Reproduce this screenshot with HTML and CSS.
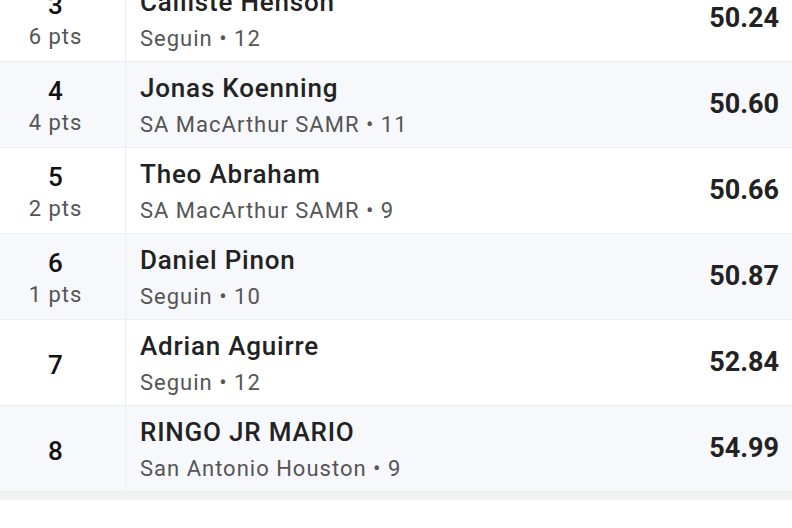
FILE: index.html
```html
<!DOCTYPE html>
<html lang="en-us">
  <head>
    <meta charset="utf-8">
    <title>Results</title>
    <link rel="stylesheet" href="styles.css">
  </head>
  <body>

    <!-- Results list -->
    <div class="results">
      <div class="row">
        <div class="place"><span class="rank">3</span><span class="pts">6 pts</span></div>
        <div class="athlete"><span class="name">Calliste Henson</span><span class="team">Seguin • 12</span></div>
        <div class="mark">50.24</div>
      </div>
      <div class="row alt">
        <div class="place"><span class="rank">4</span><span class="pts">4 pts</span></div>
        <div class="athlete"><span class="name">Jonas Koenning</span><span class="team">SA MacArthur SAMR • 11</span></div>
        <div class="mark">50.60</div>
      </div>
      <div class="row">
        <div class="place"><span class="rank">5</span><span class="pts">2 pts</span></div>
        <div class="athlete"><span class="name">Theo Abraham</span><span class="team">SA MacArthur SAMR • 9</span></div>
        <div class="mark">50.66</div>
      </div>
      <div class="row alt">
        <div class="place"><span class="rank">6</span><span class="pts">1 pts</span></div>
        <div class="athlete"><span class="name">Daniel Pinon</span><span class="team">Seguin • 10</span></div>
        <div class="mark">50.87</div>
      </div>
      <div class="row">
        <div class="place"><span class="rank">7</span></div>
        <div class="athlete"><span class="name">Adrian Aguirre</span><span class="team">Seguin • 12</span></div>
        <div class="mark">52.84</div>
      </div>
      <div class="row alt">
        <div class="place"><span class="rank">8</span></div>
        <div class="athlete"><span class="name">RINGO JR MARIO</span><span class="team">San Antonio Houston • 9</span></div>
        <div class="mark">54.99</div>
      </div>
    </div>

    <div class="list-end"></div>

  </body>
</html>
```

FILE: styles.css
```css
body {
  margin: 0;
  background-color: #fff;
  font-family: Roboto, "Noto Sans", sans-serif;
}

/* Results list, scrolled a little */
.results {
  margin-top: -24px;
}

.row {
  display: flex;
  align-items: stretch;
  height: 85px;
  border-bottom: 1px solid #eceef1;
  background-color: #fff;
}

.row.alt {
  background-color: #f7f8fc;
}

/* Rank column */
.place {
  box-sizing: border-box;
  width: 126px;
  padding: 4px 14px 0 0;
  border-right: 1px solid #eceef1;
  display: flex;
  flex-direction: column;
  align-items: center;
  justify-content: center;
  gap: 3px;
}

.place .rank {
  font-size: 26px;
  font-weight: 500;
  line-height: 30px;
  color: #111;
}

.place .pts {
  font-size: 22px;
  line-height: 28px;
  letter-spacing: 1px;
  color: #555;
}

/* Athlete name and team */
.athlete {
  flex: 1;
  display: flex;
  flex-direction: column;
  justify-content: center;
  gap: 7px;
  padding: 3px 0 0 14px;
}

.athlete .name {
  font-size: 26px;
  font-weight: 500;
  line-height: 30px;
  letter-spacing: 0.8px;
  color: #222;
}

.athlete .team {
  font-size: 22px;
  line-height: 30px;
  letter-spacing: 1px;
  color: #555;
}

/* Time */
.mark {
  display: flex;
  align-items: center;
  padding: 0 13px 2px 0;
  font-size: 27px;
  font-weight: 700;
  color: #222;
}

.list-end {
  height: 8px;
  background-color: #f2f2f2;
}
```
